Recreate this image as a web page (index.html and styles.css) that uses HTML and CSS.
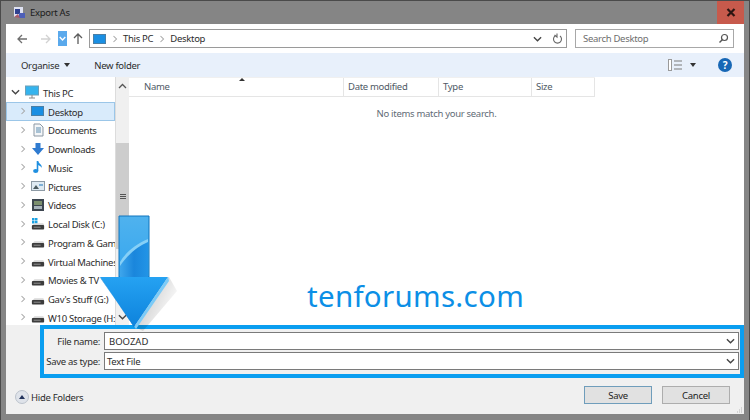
FILE: index.html
```html
<!DOCTYPE html>
<html lang="en">
<head>
  <meta charset="UTF-8" />
  <title>Export As</title>
  <link rel="stylesheet" href="styles.css">
</head>
<body>

  <svg class="defs" width="0" height="0">
    <symbol id="drive" viewBox="0 0 16 16">
      <path d="M2 8 L4 6 H14 L15 8 Z" fill="#d8d8d8"/>
      <rect x="1" y="8" width="14" height="5" rx="1" fill="#3c3c3c"/>
      <rect x="3" y="10" width="8" height="1" fill="#9a9a9a"/>
    </symbol>
    <symbol id="chev" viewBox="0 0 8 10">
      <path d="M2 1 L6 5 L2 9" fill="none" stroke="#a6a6a6" stroke-width="1.4"/>
    </symbol>
    <symbol id="down" viewBox="0 0 10 6">
      <path d="M1 1 L5 5 L9 1" fill="none" stroke="#444" stroke-width="1.5"/>
    </symbol>
  </svg>

  <div class="window">
    <div class="titlebar">
      <svg class="app-icon" width="12" height="12" viewBox="0 0 12 12">
        <rect x="1" y="0" width="9" height="10" fill="#dfe2f2"/>
        <path d="M2 2 H7 V7 H2 Z" fill="#2f418f"/>
        <path d="M6 6 L12 6 L12 11 L6 11 Z" fill="#4d5fb8"/>
        <path d="M1 10 L5 7 L7 11 Z" fill="#a85a6a"/>
      </svg>
      <span class="title">Export As</span>
      <div class="close">
        <svg width="10" height="9" viewBox="0 0 10 9"><path d="M1.5 1 L8.5 8 M8.5 1 L1.5 8" stroke="#2b1512" stroke-width="2.2"/></svg>
      </div>
    </div>

    <div class="client">
      <div class="nav">
        <svg class="nav-btn" width="12" height="12" viewBox="0 0 12 12"><path d="M11 6 H2 M6 2 L2 6 L6 10" fill="none" stroke="#6e6e6e" stroke-width="1.3"/></svg>
        <svg class="nav-btn" width="12" height="12" viewBox="0 0 12 12"><path d="M1 6 H10 M6 2 L10 6 L6 10" fill="none" stroke="#d2d2d2" stroke-width="1.3"/></svg>
        <div class="recent">
          <svg width="7" height="5" viewBox="0 0 10 6"><path d="M1 1 L5 5 L9 1" fill="none" stroke="#fff" stroke-width="2"/></svg>
        </div>
        <svg class="nav-btn" width="12" height="13" viewBox="0 0 12 13"><path d="M6 12 V2 M2 6 L6 2 L10 6" fill="none" stroke="#5c5c5c" stroke-width="1.3"/></svg>
        <div class="address">
          <span class="desk-icon small"></span>
          <svg class="crumb" width="6" height="8"><use href="#chev"/></svg>
          <span>This PC</span>
          <svg class="crumb" width="6" height="8"><use href="#chev"/></svg>
          <span>Desktop</span>
          <svg class="addr-down" width="9" height="6"><use href="#down"/></svg>
          <svg class="refresh" width="11" height="12" viewBox="0 0 11 12"><path d="M3 3 A4 4 0 1 0 8 3 M5 0.5 V4 L2.5 2" fill="none" stroke="#666" stroke-width="1.1"/></svg>
        </div>
        <div class="search">
          <span>Search Desktop</span>
          <svg width="11" height="11" viewBox="0 0 11 11"><circle cx="6.5" cy="4.5" r="3" fill="none" stroke="#555" stroke-width="1.2"/><path d="M4.5 6.5 L1.5 9.5" stroke="#555" stroke-width="1.5"/></svg>
        </div>
      </div>

      <div class="toolbar">
        <span class="tool">Organise <i class="caret"></i></span>
        <span class="tool">New folder</span>
        <span class="spacer"></span>
        <svg class="views" width="15" height="12" viewBox="0 0 15 12">
          <rect x="0.5" y="0.5" width="3" height="11" fill="#fff" stroke="#9a9a9a"/>
          <path d="M6 2 H14 M6 6 H14 M6 10 H14" stroke="#7a7a7a" stroke-width="1.2"/>
        </svg>
        <i class="caret views-caret"></i>
        <span class="help">?</span>
      </div>

      <div class="panes">
        <div class="tree">
          <div class="tree-row top">
            <svg class="twist" width="9" height="6"><use href="#down"/></svg>
            <svg class="ticon" width="14" height="14" viewBox="0 0 14 14"><rect x="0.5" y="1" width="13" height="9" fill="#35b4ee" stroke="#6d9fb8"/><path d="M4 13 H10 M7 10 V13" stroke="#888"/></svg>
            <span>This PC</span>
          </div>
          <div class="tree-row sel">
            <svg class="twist" width="6" height="8"><use href="#chev"/></svg>
            <span class="desk-icon"></span>
            <span>Desktop</span>
          </div>
          <div class="tree-row">
            <svg class="twist" width="6" height="8"><use href="#chev"/></svg>
            <svg class="ticon" width="14" height="14" viewBox="0 0 14 14"><path d="M3 1 H9 L12 4 V13 H3 Z" fill="#f4f6f8" stroke="#8b97a3"/><path d="M5 5 H10 M5 7 H10 M5 9 H10" stroke="#5d8db0"/></svg>
            <span>Documents</span>
          </div>
          <div class="tree-row">
            <svg class="twist" width="6" height="8"><use href="#chev"/></svg>
            <svg class="ticon" width="14" height="14" viewBox="0 0 14 14"><path d="M4.5 1 H9.5 V6 H13 L7 13 L1 6 H4.5 Z" fill="#2f7bd0"/></svg>
            <span>Downloads</span>
          </div>
          <div class="tree-row">
            <svg class="twist" width="6" height="8"><use href="#chev"/></svg>
            <svg class="ticon" width="14" height="14" viewBox="0 0 14 14"><path d="M6.5 1 V11" stroke="#1f8fe0" stroke-width="1.6"/><ellipse cx="4.7" cy="11" rx="2.6" ry="2" fill="#1f8fe0"/><path d="M7 1 C8 4 11 4 11 8 C10 6 8.5 6 7 5 Z" fill="#1f8fe0"/></svg>
            <span>Music</span>
          </div>
          <div class="tree-row">
            <svg class="twist" width="6" height="8"><use href="#chev"/></svg>
            <svg class="ticon" width="14" height="14" viewBox="0 0 14 14"><rect x="0.5" y="2.5" width="13" height="9" fill="#dfeaf2" stroke="#8d9aa5"/><path d="M2 10 L5 6 L8 10 Z" fill="#4b5a5f"/><rect x="8" y="5" width="4" height="2" fill="#7fb0d6"/></svg>
            <span>Pictures</span>
          </div>
          <div class="tree-row">
            <svg class="twist" width="6" height="8"><use href="#chev"/></svg>
            <svg class="ticon" width="14" height="14" viewBox="0 0 14 14"><rect x="1" y="1" width="12" height="12" fill="#3d4650"/><rect x="3" y="3" width="8" height="4" fill="#7b8f6d"/><rect x="3" y="8" width="8" height="3" fill="#a7b3bb"/></svg>
            <span>Videos</span>
          </div>
          <div class="tree-row">
            <svg class="twist" width="6" height="8"><use href="#chev"/></svg>
            <svg class="ticon" width="14" height="14" viewBox="0 0 14 14"><rect x="1" y="1" width="2.5" height="2.5" fill="#1ba1e2"/><rect x="4" y="1" width="2.5" height="2.5" fill="#1ba1e2"/><rect x="1" y="4" width="2.5" height="2.5" fill="#1ba1e2"/><rect x="4" y="4" width="2.5" height="2.5" fill="#1ba1e2"/><use href="#drive" y="1" width="14" height="14"/></svg>
            <span>Local Disk (C:)</span>
          </div>
          <div class="tree-row">
            <svg class="twist" width="6" height="8"><use href="#chev"/></svg>
            <svg class="ticon" width="14" height="14"><use href="#drive" y="1" width="14" height="14"/></svg>
            <span>Program &amp; Gam</span>
          </div>
          <div class="tree-row">
            <svg class="twist" width="6" height="8"><use href="#chev"/></svg>
            <svg class="ticon" width="14" height="14"><use href="#drive" y="1" width="14" height="14"/></svg>
            <span>Virtual Machines</span>
          </div>
          <div class="tree-row">
            <svg class="twist" width="6" height="8"><use href="#chev"/></svg>
            <svg class="ticon" width="14" height="14"><use href="#drive" y="1" width="14" height="14"/></svg>
            <span>Movies &amp; TV</span>
          </div>
          <div class="tree-row">
            <svg class="twist" width="6" height="8"><use href="#chev"/></svg>
            <svg class="ticon" width="14" height="14"><use href="#drive" y="1" width="14" height="14"/></svg>
            <span>Gav's Stuff (G:)</span>
          </div>
          <div class="tree-row">
            <svg class="twist" width="6" height="8"><use href="#chev"/></svg>
            <svg class="ticon" width="14" height="14"><use href="#drive" y="1" width="14" height="14"/></svg>
            <span>W10 Storage (H:</span>
          </div>
        </div>

        <div class="scrollbar">
          <div class="sb-btn"><svg width="9" height="6"><path d="M1 5 L4.5 1.5 L8 5" fill="none" stroke="#555" stroke-width="1.3"/></svg></div>
          <div class="sb-gap"></div>
          <div class="sb-thumb"><span class="grip"></span></div>
          <div class="sb-rest"></div>
          <div class="sb-btn"><svg width="9" height="6"><use href="#down"/></svg></div>
        </div>

        <div class="list">
          <div class="sort-mark"></div>
          <div class="headers">
            <span class="col col-name">Name</span>
            <span class="col col-date">Date modified</span>
            <span class="col col-type">Type</span>
            <span class="col col-size">Size</span>
          </div>
          <div class="empty">No items match your search.</div>
          <div class="watermark">tenforums.com</div>
        </div>
      </div>

      <div class="bottom">
        <div class="highlight">
          <div class="field">
            <label>File name:</label>
            <div class="input"><span class="value">BOOZAD</span><svg width="9" height="6"><use href="#down"/></svg></div>
          </div>
          <div class="field">
            <label>Save as type:</label>
            <div class="input"><span>Text File</span><svg width="9" height="6"><use href="#down"/></svg></div>
          </div>
        </div>
        <div class="footer">
          <span class="hide-btn"><i class="hide-caret"></i></span>
          <span class="hide-label">Hide Folders</span>
          <span class="spacer"></span>
          <button class="btn default">Save</button>
          <button class="btn">Cancel</button>
        </div>
        <svg class="resize" width="6" height="6" viewBox="0 0 6 6"><path d="M4 1 H5 M4 3 H5 M2 3 H3 M4 5 H5 M2 5 H3 M0 5 H1" stroke="#b5b5b5"/></svg>
      </div>
    </div>

    <svg class="big-arrow" width="90" height="122" viewBox="0 0 90 122">
      <defs>
        <linearGradient id="shaft" x1="0" y1="0" x2="0" y2="1">
          <stop offset="0" stop-color="#4fb2ee"/>
          <stop offset="1" stop-color="#35a6ee"/>
        </linearGradient>
        <linearGradient id="lower" x1="0" y1="0" x2="1" y2="0">
          <stop offset="0" stop-color="#3ea6ec"/>
          <stop offset="0.5" stop-color="#1a86dc"/>
          <stop offset="1" stop-color="#2294e6"/>
        </linearGradient>
        <linearGradient id="head" x1="0" y1="0" x2="0" y2="1">
          <stop offset="0" stop-color="#25a2f2"/>
          <stop offset="1" stop-color="#0d82dc"/>
        </linearGradient>
        <linearGradient id="shade" x1="0" y1="0" x2="1" y2="0.6">
          <stop offset="0" stop-color="#000" stop-opacity="0.28"/>
          <stop offset="1" stop-color="#000" stop-opacity="0"/>
        </linearGradient>
      </defs>
      <path d="M56 62 H70 L78 76 L44 116 L36 112 Z" fill="url(#shade)"/>
      <path d="M20 1 H50 V62 H20 Z" fill="url(#shaft)" stroke="#1175bd"/>
      <path d="M21 50 C27 40 37 32 49 26 V62 H21 Z" fill="url(#lower)"/>
      <path d="M21 47 C27 37 37 29 49 24 V27 C37 32 28 41 21 51 Z" fill="#86d0f7"/>
      <path d="M1 62 H69 L35 112 Z" fill="url(#head)"/>
      <path d="M69 62 L70 66 L37 114 L35 112 Z" fill="#7ccbf7"/>
      <path d="M1 62 L35 112 L37 114 L34 110 L2 64 Z" fill="#0b74c8"/>
    </svg>
  </div>

</body>
</html>
```

FILE: styles.css
```css
* {
  box-sizing: border-box;
}

body {
  margin: 0;
  font-family: "Noto Sans", "Open Sans", sans-serif;
  font-size: 9.5px;
  letter-spacing: -0.3px;
  color: #2c2c2c;
}

.defs {
  position: absolute;
}

.window {
  position: relative;
  width: 750px;
  height: 420px;
  overflow: hidden;
  display: flex;
  flex-direction: column;
  background: #858585;
  border: 1px solid #4a4a4a;
  border-bottom: 0;
}

.titlebar {
  height: 23px;
  display: flex;
  align-items: center;
  padding-left: 12px;
  flex-shrink: 0;
}

.title {
  margin-left: 5px;
  color: #1c1c1c;
}

.close {
  margin-left: auto;
  margin-right: 5px;
  width: 27px;
  height: 23px;
  background: #c75a4c;
  display: flex;
  align-items: center;
  justify-content: center;
}

.client {
  margin: 0 5px 6px;
  height: 390px;
  display: flex;
  flex-direction: column;
  background: #fff;
}

/* nav row */
.nav {
  height: 29px;
  flex-shrink: 0;
  display: flex;
  align-items: center;
  padding-left: 10px;
}

.nav-btn {
  margin-right: 9px;
}

.nav-btn:nth-child(2) {
  margin-left: 3px;
  margin-right: 6px;
}

.recent {
  width: 9px;
  height: 15px;
  background: #5aa9ec;
  display: flex;
  align-items: center;
  justify-content: center;
  margin-right: 5px;
}

.nav-btn:nth-child(4) {
  margin-right: 5px;
}

.address {
  width: 478px;
  height: 19px;
  border: 1px solid #9a9a9a;
  display: flex;
  align-items: center;
  padding-left: 3px;
}

.crumb {
  margin: 0 5px 0 6px;
}

.addr-down {
  margin-left: auto;
  margin-right: 10px;
}

.refresh {
  margin-right: 3px;
}

.search {
  width: 159px;
  height: 19px;
  margin-left: 8px;
  border: 1px solid #a8a8a8;
  display: flex;
  align-items: center;
  justify-content: space-between;
  padding: 0 4px 0 7px;
  color: #6d6d6d;
}

.toolbar {
  height: 24px;
  flex-shrink: 0;
  display: flex;
  align-items: center;
  padding-left: 15px;
  background: #e8f0fb;
}

.tool {
  margin-right: 24px;
  display: flex;
  align-items: center;
}

.caret {
  display: inline-block;
  margin-left: 5px;
  border-left: 3.5px solid transparent;
  border-right: 3.5px solid transparent;
  border-top: 4px solid #333;
}

.spacer {
  flex: 1;
}

.views {
  margin-right: 0;
}

.views-caret {
  margin: 0 22px 0 7px;
}

.help {
  width: 14px;
  height: 14px;
  margin-right: 12px;
  border-radius: 50%;
  background: #1767b5;
  color: #fff;
  font-weight: 700;
  font-size: 10px;
  line-height: 14px;
  text-align: center;
}

/* panes */
.panes {
  flex: 1;
  min-height: 0;
  display: flex;
  overflow: hidden;
}

.tree {
  width: 110px;
  flex-shrink: 0;
  overflow: hidden;
  padding-top: 6px;
  border-right: 1px solid #dcdcdc;
}

.tree-row {
  height: 18.75px;
  display: flex;
  align-items: center;
  padding-left: 14px;
  white-space: nowrap;
}

.tree-row > span:last-child {
  margin-top: 2px;
}

.tree-row.top {
  padding-left: 5px;
}

.tree-row.top .twist {
  margin-right: 5px;
}

.tree-row.top .ticon {
  margin-right: 4px;
}

.tree-row.sel {
  background: #d9ebfb;
  border: 1px solid #9bc6e8;
  padding-left: 13px;
}

.twist {
  flex-shrink: 0;
  margin-right: 5px;
}

.ticon {
  flex-shrink: 0;
  margin-right: 3px;
}

.desk-icon {
  display: inline-block;
  flex-shrink: 0;
  width: 13px;
  height: 10px;
  margin-right: 4px;
  background: #1a8fe3;
  border: 1px solid #4a7fa6;
}

.desk-icon.small {
  margin-right: 0;
}

.scrollbar {
  width: 13px;
  flex-shrink: 0;
  display: flex;
  flex-direction: column;
  background: #f0f0f0;
}

.sb-btn {
  height: 17px;
  flex-shrink: 0;
  display: flex;
  align-items: center;
  justify-content: center;
  background: #f0f0f0;
}

.sb-gap {
  height: 49px;
  flex-shrink: 0;
}

.sb-thumb {
  height: 106px;
  flex-shrink: 0;
  background: #cdcdcd;
  display: flex;
  align-items: center;
  justify-content: center;
}

.grip {
  width: 6px;
  height: 5px;
  border-top: 1px solid #555;
  border-bottom: 1px solid #555;
  background: linear-gradient(#555, #555) center / 100% 1px no-repeat;
}

.sb-rest {
  flex: 1;
}

.list {
  position: relative;
  flex: 1;
}

.sort-mark {
  position: absolute;
  left: 110px;
  top: 1px;
  border-left: 3px solid transparent;
  border-right: 3px solid transparent;
  border-bottom: 3px solid #333;
}

.headers {
  display: flex;
  height: 20px;
  color: #4f5a66;
  border-top: 1px solid #f0f0f0;
  border-bottom: 1px solid #e5e5e5;
  width: 466px;
}

.col {
  display: flex;
  align-items: center;
  padding-left: 4px;
  padding-bottom: 1px;
  border-right: 1px solid #e5e5e5;
}

.col-name {
  width: 215px;
  padding-left: 15px;
}

.col-date {
  width: 95px;
}

.col-type {
  width: 93px;
}

.col-size {
  width: 63px;
}

.empty {
  margin-top: 10px;
  text-align: center;
  color: #5f6b76;
}

.watermark {
  position: absolute;
  left: 178px;
  top: 204px;
  font-size: 29.5px;
  letter-spacing: 0.3px;
  color: #0c8fe6;
  line-height: 1;
}

/* bottom */
.bottom {
  position: relative;
  height: 89px;
  flex-shrink: 0;
  background: #f0f0f0;
}

.highlight {
  margin-left: 34px;
  width: 704px;
  height: 53px;
  border: 4px solid #0a9ef0;
  padding: 3px 1px 0 0;
  display: flex;
  flex-direction: column;
  gap: 2px;
}

.field {
  display: flex;
  align-items: center;
  height: 18px;
}

.field label {
  width: 56px;
  flex-shrink: 0;
  text-align: right;
  white-space: nowrap;
}

.input {
  flex: 1;
  height: 18px;
  margin-left: 4px;
  background: #fff;
  border: 1px solid #7a7a7a;
  display: flex;
  align-items: center;
  justify-content: space-between;
  padding: 0 3px 0 2px;
}

.value {
  margin-left: 2px;
  letter-spacing: 0;
}

.footer {
  height: 34px;
  display: flex;
  align-items: center;
  padding-left: 9px;
}

.hide-btn {
  width: 14px;
  height: 14px;
  margin-top: 4px;
  border-radius: 50%;
  background: #dfe3ea;
  border: 1px solid #bcc3cc;
  display: flex;
  align-items: center;
  justify-content: center;
}

.hide-caret {
  border-left: 3px solid transparent;
  border-right: 3px solid transparent;
  border-bottom: 4px solid #23345c;
}

.hide-label {
  margin: 4px 0 0 2px;
}

.btn {
  width: 68px;
  height: 18px;
  margin-right: 10px;
  padding: 0;
  background: #e1e1e1;
  border: 1px solid #adadad;
  font-family: inherit;
  font-size: 9.5px;
  letter-spacing: inherit;
  color: #222;
}

.btn:last-child {
  margin-right: 14px;
}

.btn.default {
  border: 1px solid #6f9dbb;
}

.resize {
  position: absolute;
  right: 1px;
  bottom: 1px;
}

.big-arrow {
  position: absolute;
  left: 98px;
  top: 214px;
}
```
